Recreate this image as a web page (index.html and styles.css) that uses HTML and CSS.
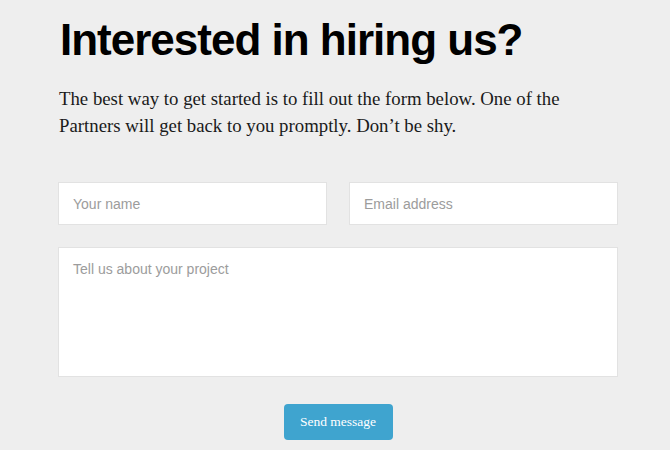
FILE: index.html
```html
<!DOCTYPE html>
<html>
<head>
<meta charset="utf-8">
<link rel="stylesheet" href="styles.css">
</head>
<body>
<main class="page">
  <h1 class="title">Interested in hiring us?</h1>
  <p class="intro">The best way to get started is to fill out the form below. One of the Partners will get back to you promptly. Don’t be shy.</p>
  <form class="form">
    <div class="row">
      <input class="field" type="text" placeholder="Your name">
      <input class="field" type="email" placeholder="Email address">
    </div>
    <textarea class="field area" placeholder="Tell us about your project"></textarea>
    <div class="actions">
      <button type="button" class="send">Send message</button>
    </div>
  </form>
</main>
</body>
</html>
```
FILE: styles.css
```css
html, body {
  margin: 0;
  padding: 0;
  background: #eeeeee;
}
.page {
  width: 560px;
  margin-left: 58px;
  padding-top: 12px;
}
.title {
  margin: 0 0 0 2px;
  font-family: "Liberation Sans", Arial, sans-serif;
  font-weight: bold;
  font-size: 44px;
  line-height: 56px;
  color: #000;
  letter-spacing: -1px;
}
.intro {
  margin: 17px 0 0 1px;
  font-family: "Liberation Serif", "Times New Roman", serif;
  font-size: 18.8px;
  line-height: 27px;
  color: #1a1a1a;
  width: 540px;
}
.form {
  margin-top: 43px;
}
.row {
  display: flex;
  gap: 22px;
}
.field {
  box-sizing: border-box;
  flex: 1;
  height: 43px;
  border: 1px solid #e2e2e2;
  background: #fff;
  padding: 0 14px;
  font-family: "Liberation Sans", Arial, sans-serif;
  font-size: 14px;
  color: #333;
  outline: none;
  margin: 0;
}
.field::placeholder {
  color: #9c9c9c;
}
.area {
  display: block;
  width: 100%;
  height: 130px;
  margin-top: 22px;
  padding: 13px 14px;
  resize: none;
}
.actions {
  display: flex;
  justify-content: center;
  margin-top: 27px;
}
.send {
  width: 109px;
  height: 36px;
  border: none;
  border-radius: 4px;
  background: #3fa4cf;
  color: #fff;
  font-family: "Liberation Serif", "Times New Roman", serif;
  font-size: 13.5px;
  padding: 0;
}
```
